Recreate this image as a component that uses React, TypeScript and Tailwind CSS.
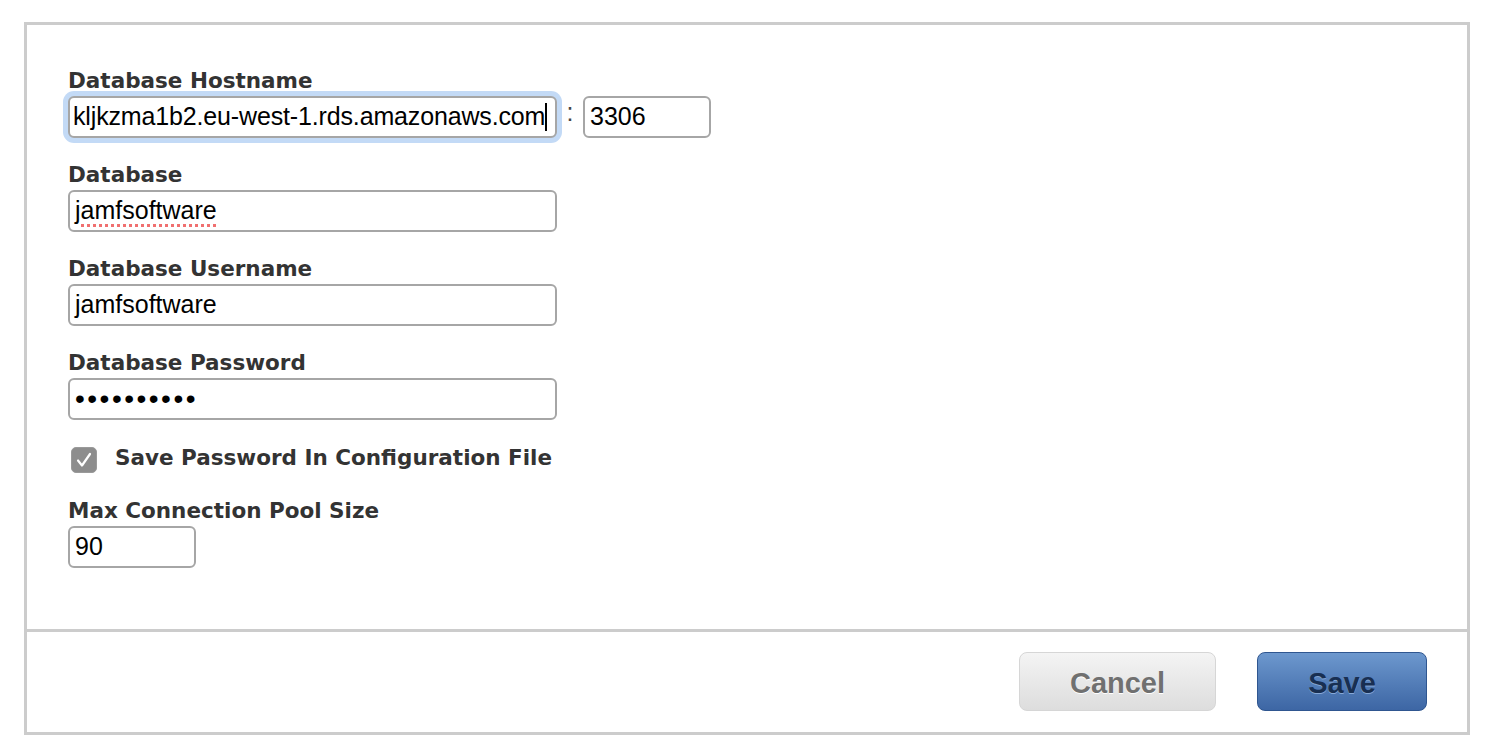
import React from 'react';

const labelCls =
  "block h-[26px] mb-[2px] text-[21.5px] leading-[26px] font-bold text-[#333333] font-['DejaVu_Sans',sans-serif] whitespace-nowrap";

const fieldCls =
  "h-[42px] flex items-center border-2 border-[#a6a6a6] rounded-[6px] bg-white px-[5px] text-[25px] text-black font-['Liberation_Sans',Arial,sans-serif] whitespace-nowrap overflow-hidden";

function Label({ children }: { children: React.ReactNode }) {
  return <span className={labelCls}>{children}</span>;
}

export default function App() {
  return (
    <div className="w-[1488px] h-[754px] bg-white pt-[22px] pl-[24px]">
      <div className="w-[1446px] h-[713px] border-[3px] border-[#cccccc] bg-white flex flex-col">
        {/* form body */}
        <div className="h-[604px] pl-[41px] pt-[43px] flex flex-col">
          {/* hostname + port */}
          <div>
            <Label>Database Hostname</Label>
            <div className="flex items-center">
              <div className={`${fieldCls} w-[489px] !px-[3px] ring-[5px] ring-[#c3daf6]`}>
                <span className="tracking-[-0.15px]">kljkzma1b2.eu-west-1.rds.amazonaws.com</span>
                <span className="w-[2px] h-[28px] bg-black shrink-0" />
              </div>
              <span className="w-[26px] text-center text-[25px] leading-none text-[#444] font-['Liberation_Sans',Arial,sans-serif] -mt-[10px]">
                :
              </span>
              <div className={`${fieldCls} w-[128px]`}>3306</div>
            </div>
          </div>

          <div className="mt-[24px]">
            <Label>Database</Label>
            <div className={`${fieldCls} w-[489px]`}>
              <span className="underline decoration-dotted decoration-[#f07070] decoration-[3px] underline-offset-[5px]">
                jamfsoftware
              </span>
            </div>
          </div>

          <div className="mt-[24px]">
            <Label>Database Username</Label>
            <div className={`${fieldCls} w-[489px]`}>jamfsoftware</div>
          </div>

          <div className="mt-[24px]">
            <Label>Database Password</Label>
            <div className={`${fieldCls} w-[489px]`}>
              <span className="text-[28px] tracking-[2.5px]">••••••••••</span>
            </div>
          </div>

          {/* checkbox */}
          <div className="mt-[25px] flex items-start">
            <span className="ml-[3px] mt-[2px] w-[26px] h-[26px] rounded-[5px] bg-[#8d8d8d] border border-[#9a9a9a] flex items-center justify-center">
              <svg width="18" height="18" viewBox="0 0 18 18" fill="none">
                <path d="M3 9.5 L7 14.5 L15 3" stroke="white" strokeWidth="2.2" strokeLinecap="round" strokeLinejoin="round" />
              </svg>
            </span>
            <span className={`${labelCls} ml-[18px] mb-0`}>Save Password In Configuration File</span>
          </div>

          <div className="mt-[25px]">
            <Label>Max Connection Pool Size</Label>
            <div className={`${fieldCls} w-[128px]`}>90</div>
          </div>
        </div>

        {/* footer */}
        <div className="h-[100px] border-t-[3px] border-[#cccccc] flex items-center justify-end gap-[41px] pr-[40px] pt-[1px]">
          <button className="w-[197px] h-[59px] pt-[6px] rounded-[8px] border border-[#d6d6d6] bg-gradient-to-b from-[#f4f4f4] to-[#dddddd] text-[29px] font-bold text-[#707070] font-['Liberation_Sans',Arial,sans-serif] [text-shadow:0_1px_0_#ffffff]">
            Cancel
          </button>
          <button className="w-[170px] h-[59px] pt-[6px] rounded-[8px] border border-[#2f5690] bg-gradient-to-b from-[#6d98ce] to-[#3d66a4] text-[29px] font-bold text-[#182f52] font-['Liberation_Sans',Arial,sans-serif] [text-shadow:0_1px_0_#86a9d8]">
            Save
          </button>
        </div>
      </div>
    </div>
  );
}
